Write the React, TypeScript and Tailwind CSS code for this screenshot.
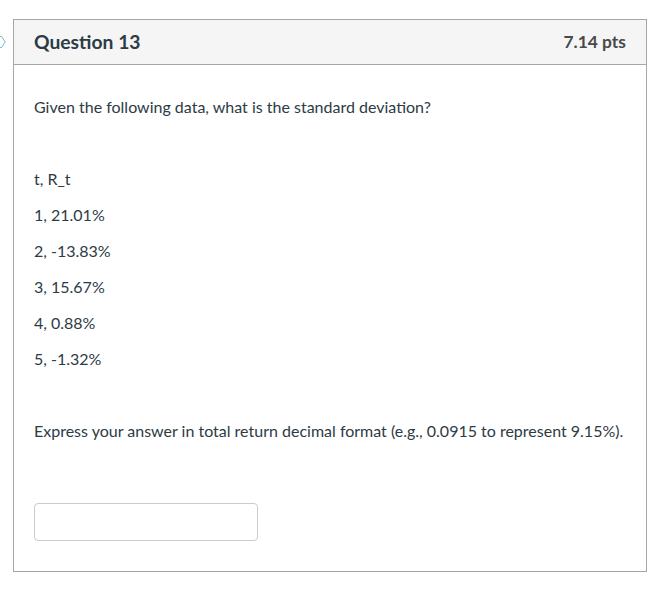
import React from "react";

export default function App() {
  const rows = ["t, R_t", "1, 21.01%", "2, -13.83%", "3, 15.67%", "4, 0.88%", "5, -1.32%"];
  return (
    <div
      className="relative w-[667px] h-[593px] bg-white pl-[13px] pt-[19px] text-[#2d3b45]"
      style={{ fontFamily: "Lato, 'Noto Sans', sans-serif" }}
    >
      <svg className="absolute left-0 top-[36px]" width="6" height="12" viewBox="0 0 6 12">
        <path d="M-1 0.5 L1.5 0.5 L5.2 6 L1.5 11.5 L-1 11.5" fill="none" stroke="#7fb2d9" strokeWidth="1" />
      </svg>
      <div className="w-[634px] border border-[#a6a6a6]">
        <div className="flex items-center justify-between h-[45px] px-5 bg-[#f5f5f5] border-b border-[#a6a6a6]">
          <span className="text-[19.3px] font-bold">Question 13</span>
          <span className="text-[17.4px] font-bold text-[#494949]">7.14 pts</span>
        </div>
        <div className="px-5 pt-[30px] pb-[30px] text-[16px] leading-6">
          <p className="mb-3">Given the following data, what is the standard deviation?</p>
          <p className="mb-3">&nbsp;</p>
          {rows.map((r) => (
            <p key={r} className="mb-3">{r}</p>
          ))}
          <p className="mb-3">&nbsp;</p>
          <p>Express your answer in total return decimal format (e.g., 0.0915 to represent 9.15%).</p>
          <input
            type="text"
            className="block mt-[60px] w-[224px] h-[38px] border border-[#c7cdd1] rounded-[4px] bg-white"
          />
        </div>
      </div>
    </div>
  );
}
